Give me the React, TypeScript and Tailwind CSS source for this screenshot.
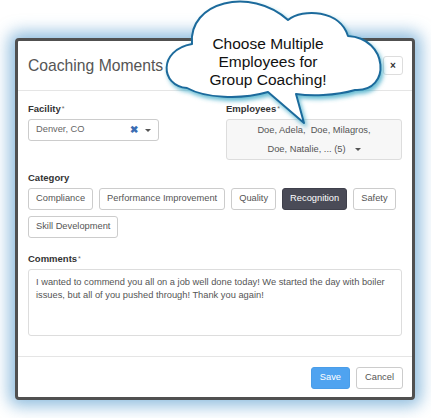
import React from 'react';

const categories = [
  'Compliance',
  'Performance Improvement',
  'Quality',
  'Recognition',
  'Safety',
  'Skill Development',
];

const selected = 'Recognition';

const Label = ({ text, required }: { text: string; required?: boolean }) => (
  <div className="mb-1 text-[9.5px] font-bold leading-[12px] text-[#333]">
    {text}
    {required && <span className="ml-[1px] align-top text-[7px] font-normal text-[#666]">*</span>}
  </div>
);

const Caret = () => (
  <span className="inline-block h-0 w-0 border-x-[3px] border-t-[3px] border-x-transparent border-t-[#555]" />
);

const Cloud = () => (
  <svg className="pointer-events-none absolute left-0 top-0" width="431" height="418" viewBox="0 0 431 418">
    <defs>
      <filter id="cloudShadow" x="-10%" y="-10%" width="130%" height="140%">
        <feDropShadow dx="2" dy="3" stdDeviation="2" floodColor="#39a6c4" floodOpacity="0.75" />
      </filter>
    </defs>
    <path
      d="M187 88 C160 86 158 50 192 44 C188 2 250 -14 288 20 C303 8 340 10 348 36 C388 38 392 92 355 90 C335 96 310 96 296 94 L304 123 L268 92 C240 100 205 98 187 88 Z"
      fill="#fff"
      stroke="#1d6b9c"
      strokeWidth="2"
      strokeLinejoin="round"
      filter="url(#cloudShadow)"
    />
  </svg>
);

export default function App() {
  return (
    <div className="relative h-[418px] w-[431px] overflow-hidden bg-white font-['Liberation_Sans',Arial,sans-serif]">
      <div className="ml-[15px] mt-[38px] w-[400px] rounded-[4px] border-[3px] border-[#505050] bg-white shadow-[0_0_16px_6px_rgba(70,145,200,0.6)]">
        {/* header */}
        <div className="flex h-[50px] items-center justify-between border-b border-[#e5e5e5] pl-[10px] pr-[9px]">
          <h4 className="text-[15.7px] text-[#555]">Coaching Moments</h4>
          <button className="flex h-[19px] w-[20px] items-center justify-center rounded-[3px] border border-[#ddd] text-[10px] font-bold text-[#333]">
            ×
          </button>
        </div>

        {/* body */}
        <div className="px-[10px] pb-[20px] pt-[12px]">
          <div className="grid grid-cols-[198px_1fr]">
            <div>
              <Label text="Facility" required />
              <div className="flex h-[22px] w-[131px] items-center rounded-[3px] border border-[#ccc] pl-[7px] pr-[7px] text-[9.3px] text-[#666]">
                <span className="flex-1">Denver, CO</span>
                <span className="mr-[7px] text-[10px] font-bold leading-none text-[#3b6db3]">✖</span>
                <Caret />
              </div>
            </div>
            <div>
              <Label text="Employees" required />
              <div className="flex h-[41px] flex-col items-center justify-center rounded-[3px] border border-[#ddd] bg-[#f7f7f7] text-[9.3px] leading-[19px] text-[#555]">
                <span>Doe, Adela,&nbsp; Doe, Milagros,</span>
                <span className="flex items-center gap-[9px]">
                  Doe, Natalie, ... (5)
                  <Caret />
                </span>
              </div>
            </div>
          </div>

          <div className="mt-[12px]">
            <Label text="Category" />
            <div className="flex flex-wrap gap-[6px]">
              {categories.map((c) => (
                <button
                  key={c}
                  className={`h-[22px] rounded-[3px] border px-[7px] text-[9.3px] ${
                    c === selected
                      ? 'border-[#3f404b] bg-[#4a4b57] text-white'
                      : 'border-[#ccc] bg-white text-[#555]'
                  }`}
                >
                  {c}
                </button>
              ))}
            </div>
          </div>

          <div className="mt-[15px]">
            <Label text="Comments" required />
            <div className="h-[67px] rounded-[3px] border border-[#ddd] px-[7px] pt-[6px] text-[9.3px] leading-[13px] text-[#555]">
              I wanted to commend you all on a job well done today! We started the day with boiler issues, but all of you
              pushed through! Thank you again!
            </div>
          </div>
        </div>

        {/* footer */}
        <div className="flex justify-end gap-[6px] border-t border-[#e5e5e5] px-[9px] pb-[8px] pt-[10px]">
          <button className="h-[22px] rounded-[3px] border border-[#4a9de8] bg-[#4fa3f0] px-[8px] text-[9.3px] text-white">
            Save
          </button>
          <button className="h-[22px] rounded-[3px] border border-[#ccc] bg-white px-[8px] text-[9.3px] text-[#555]">
            Cancel
          </button>
        </div>
      </div>

      <Cloud />
      <div className="pointer-events-none absolute left-[188px] top-[35px] w-[160px] text-center text-[15.5px] leading-[18px] text-[#111]">
        Choose Multiple
        <br />
        Employees for
        <br />
        Group Coaching!
      </div>
    </div>
  );
}
